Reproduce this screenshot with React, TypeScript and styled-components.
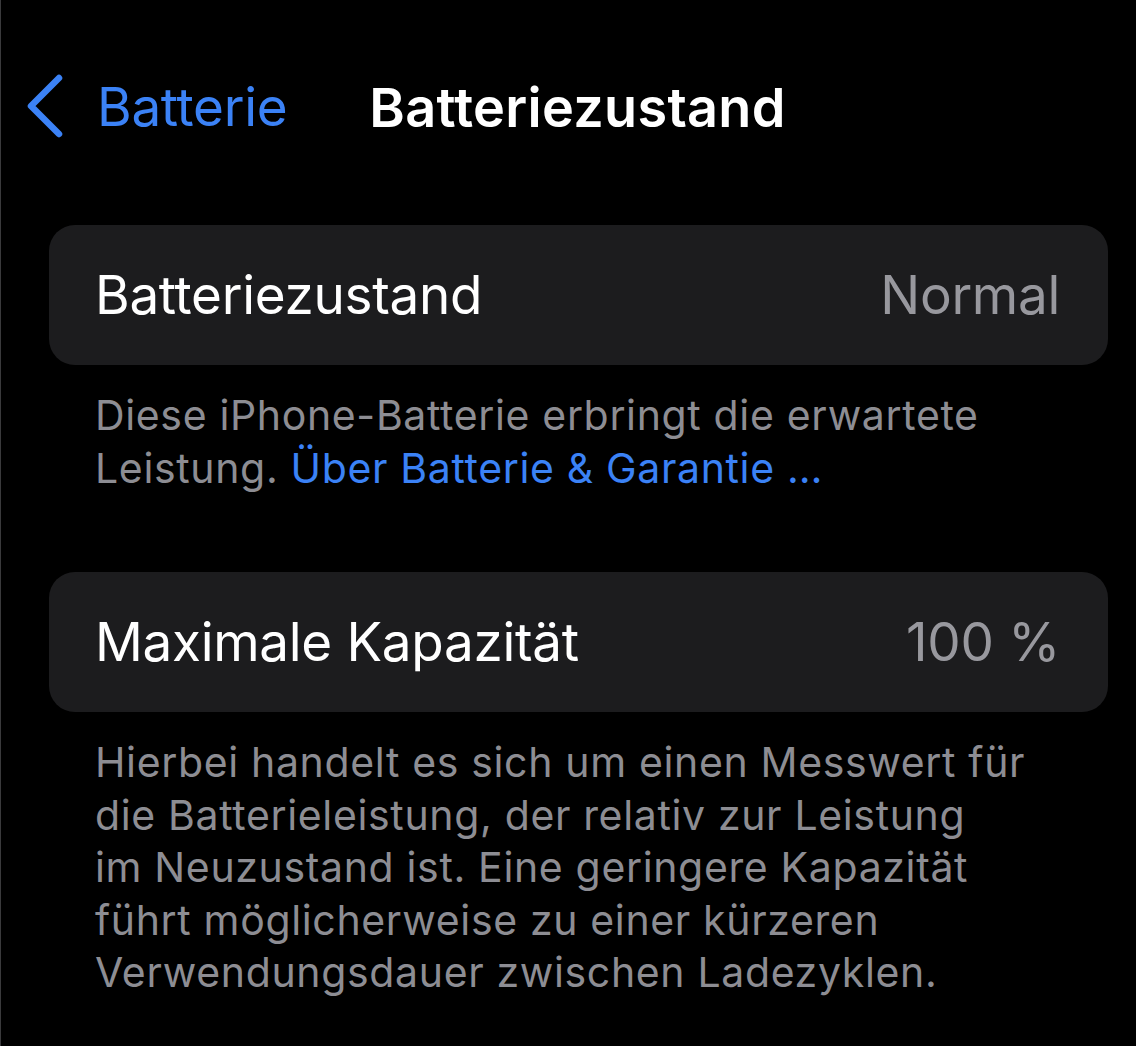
import styled, { createGlobalStyle } from 'styled-components';

const GlobalStyle = createGlobalStyle`
  html, body {
    margin: 0;
    padding: 0;
    background: #000000;
    overflow: hidden;
  }
  body {
    font-family: Inter, "Noto Sans", "Liberation Sans", sans-serif;
    -webkit-font-smoothing: antialiased;
  }
`;

const Screen = styled.div`
  width: 1156px;
  height: 1046px;
  background: #000000;
  border-left: 1px solid #3a3a3c;
  box-sizing: border-box;
`;

const NavBar = styled.div`
  display: grid;
  grid-template-columns: 1fr auto 1fr;
  align-items: center;
  height: 100px;
  padding: 57px 26px 0 24px;
`;

const BackButton = styled.div`
  display: flex;
  align-items: center;
  gap: 32px;
  color: #3b82f6;
  font-size: 53px;
  letter-spacing: -0.3px;

  svg {
    flex-shrink: 0;
    margin-top: -2px;
  }
`;

const Title = styled.div`
  color: #ffffff;
  font-size: 54px;
  font-weight: 600;
  letter-spacing: 0.3px;
`;

const Content = styled.div`
  display: flex;
  flex-direction: column;
  gap: 78px;
  padding: 68px 48px 0 48px;
`;

const Section = styled.div`
  display: flex;
  flex-direction: column;
`;

const Card = styled.div`
  display: flex;
  align-items: center;
  justify-content: space-between;
  height: 140px;
  padding: 0 48px 0 46px;
  background: #1c1c1e;
  border-radius: 26px;
  font-size: 53px;
  letter-spacing: -0.3px;
`;

const Label = styled.span`
  color: #ffffff;
`;

const Value = styled.span`
  color: #98989e;
`;

const Footer = styled.div`
  padding: 24px 40px 0 46px;
  color: #8d8d93;
  font-size: 41px;
  line-height: 52.5px;
  letter-spacing: 0.65px;
  white-space: nowrap;
`;

const FooterLink = styled.span`
  color: #3b82f6;
`;

const ROWS = [
  {
    label: 'Batteriezustand',
    value: 'Normal',
    footer: (
      <>
        Diese iPhone-Batterie erbringt die erwartete
        <br />
        Leistung. <FooterLink>Über Batterie &amp; Garantie …</FooterLink>
      </>
    ),
  },
  {
    label: 'Maximale Kapazität',
    value: '100 %',
    footer: (
      <>
        Hierbei handelt es sich um einen Messwert für
        <br />
        die Batterieleistung, der relativ zur Leistung
        <br />
        im Neuzustand ist. Eine geringere Kapazität
        <br />
        führt möglicherweise zu einer kürzeren
        <br />
        Verwendungsdauer zwischen Ladezyklen.
      </>
    ),
  },
];

const App = () => {
  return (
    <Screen>
      <GlobalStyle />
      <NavBar>
        <BackButton>
          <svg width="40" height="64" viewBox="0 0 40 64" fill="none">
            <path
              d="M34 4 L6 32 L34 60"
              stroke="#3b82f6"
              strokeWidth="6.5"
              strokeLinecap="round"
              strokeLinejoin="round"
            />
          </svg>
          <span>Batterie</span>
        </BackButton>
        <Title>Batteriezustand</Title>
        <span />
      </NavBar>
      <Content>
        {ROWS.map((row) => (
          <Section key={row.label}>
            <Card>
              <Label>{row.label}</Label>
              <Value>{row.value}</Value>
            </Card>
            <Footer>{row.footer}</Footer>
          </Section>
        ))}
      </Content>
    </Screen>
  );
};

export default App;
